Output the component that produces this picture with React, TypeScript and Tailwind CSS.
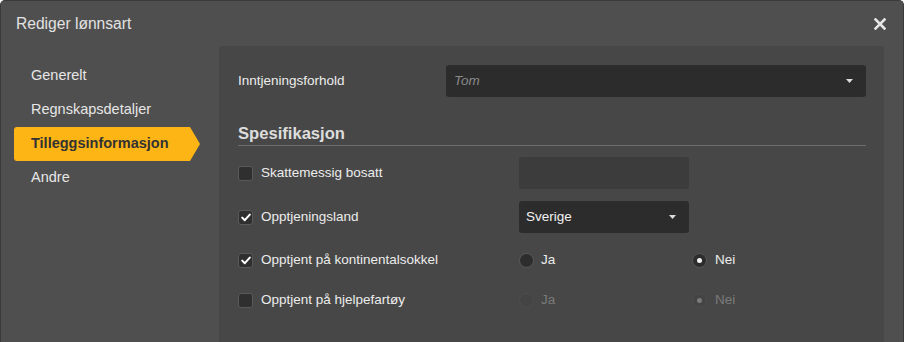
import React from "react";

const font = { fontFamily: '"Liberation Sans", Arial, sans-serif' };

function Caret() {
  return (
    <svg width="7" height="4" viewBox="0 0 7 4" className="shrink-0">
      <path d="M0 0 H7 L3.5 4 Z" fill="#dcdcdc" />
    </svg>
  );
}

function Checkbox({ checked }: { checked?: boolean }) {
  return (
    <div className="w-[15px] h-[15px] shrink-0 rounded-[3px] bg-[#2f2f2f] border border-[#595959] flex items-center justify-center">
      {checked && (
        <svg width="10" height="9" viewBox="0 0 10 9">
          <path d="M1.2 4.6 L3.8 7.2 L8.8 1.6" fill="none" stroke="#ffffff" strokeWidth="2" strokeLinecap="round" strokeLinejoin="round" />
        </svg>
      )}
    </div>
  );
}

function Radio({ checked, disabled }: { checked?: boolean; disabled?: boolean }) {
  return (
    <div
      className={
        "w-[15px] h-[15px] shrink-0 rounded-full border flex items-center justify-center " +
        (disabled ? "bg-[#444444] border-[#4e4e4e]" : "bg-[#2d2d2d] border-[#5a5a5a]")
      }
    >
      {checked && (
        <div className={"w-[5px] h-[5px] rounded-full " + (disabled ? "bg-[#7a7a7a]" : "bg-[#f2f2f2]")} />
      )}
    </div>
  );
}

function RadioPair({ value, disabled }: { value: "ja" | "nei"; disabled?: boolean }) {
  const txt = disabled ? "text-[#7a7a7a]" : "text-[#ececec]";
  return (
    <div className="flex items-center">
      <div className="w-[173px] flex items-center gap-[7px]">
        <Radio checked={value === "ja"} disabled={disabled} />
        <span className={"text-[13.5px] " + txt}>Ja</span>
      </div>
      <div className="flex items-center gap-[8px]">
        <Radio checked={value === "nei"} disabled={disabled} />
        <span className={"text-[13.5px] " + txt}>Nei</span>
      </div>
    </div>
  );
}

function CheckRow({
  label,
  checked,
  mt,
  children,
}: {
  label: string;
  checked?: boolean;
  mt: string;
  children?: React.ReactNode;
}) {
  return (
    <div className={"flex items-center h-[32px] " + mt}>
      <div className="w-[281px] flex items-center gap-[8px]">
        <Checkbox checked={checked} />
        <span className="text-[13.5px] text-[#ececec]">{label}</span>
      </div>
      {children}
    </div>
  );
}

export default function App() {
  const nav = ["Generelt", "Regnskapsdetaljer", "Tilleggsinformasjon", "Andre"];
  return (
    <div style={font} className="w-[904px] h-[342px] bg-[#4f4f4f] border-x border-t border-[#3b3b3b] rounded-t-[5px] flex flex-col overflow-hidden">
      <div className="h-[45px] shrink-0 flex items-center justify-between pl-[15px] pr-[17px]">
        <span className="text-[15.6px] text-[#e2e2e2]">Rediger lønnsart</span>
        <svg width="12" height="12" viewBox="0 0 12 12">
          <path d="M1.5 1.5 L10.5 10.5 M10.5 1.5 L1.5 10.5" stroke="#e6e6e6" strokeWidth="2.6" strokeLinecap="square" />
        </svg>
      </div>
      <div className="flex flex-1 min-h-0">
        <div className="w-[218px] shrink-0 pt-[13px] pl-[13px]">
          {nav.map((n) =>
            n === "Tilleggsinformasjon" ? (
              <div
                key={n}
                className="h-[34px] w-[186px] flex items-center pl-[17px] bg-[#fdb515] rounded-l-[3px] text-[14.5px] font-bold text-[#333333] [clip-path:polygon(0_0,calc(100%-10px)_0,100%_50%,calc(100%-10px)_100%,0_100%)]"
              >
                {n}
              </div>
            ) : (
              <div key={n} className="h-[34px] flex items-center pl-[17px] text-[14.5px] text-[#e6e6e6]">
                {n}
              </div>
            )
          )}
        </div>
        <div className="w-[665px] shrink-0 bg-[#474747] rounded-t-[3px] pl-[19px] pr-[18px]">
          <div className="mt-[19px] flex items-center h-[32px]">
            <span className="w-[208px] text-[13.5px] text-[#ececec]">Inntjeningsforhold</span>
            <div className="flex-1 h-[32px] bg-[#2c2c2c] rounded-[3px] flex items-center justify-between pl-[8px] pr-[13px]">
              <span className="text-[13.5px] italic text-[#8a8a8a]">Tom</span>
              <Caret />
            </div>
          </div>
          <div className="mt-[27px] pb-[1px] border-b border-[#6c6c6c] leading-[20px] text-[16.6px] font-bold text-[#dddddd]">
            Spesifikasjon
          </div>
          <CheckRow label="Skattemessig bosatt" mt="mt-[11px]">
            <div className="w-[170px] h-[32px] bg-[#3c3c3c] rounded-[3px]" />
          </CheckRow>
          <CheckRow label="Opptjeningsland" checked mt="mt-[12px]">
            <div className="w-[170px] h-[32px] bg-[#2c2c2c] rounded-[3px] flex items-center justify-between pl-[7px] pr-[13px]">
              <span className="text-[13.5px] text-[#f2f2f2]">Sverige</span>
              <Caret />
            </div>
          </CheckRow>
          <CheckRow label="Opptjent på kontinentalsokkel" checked mt="mt-[11px]">
            <RadioPair value="nei" />
          </CheckRow>
          <CheckRow label="Opptjent på hjelpefartøy" mt="mt-[8px]">
            <RadioPair value="nei" disabled />
          </CheckRow>
        </div>
      </div>
    </div>
  );
}
